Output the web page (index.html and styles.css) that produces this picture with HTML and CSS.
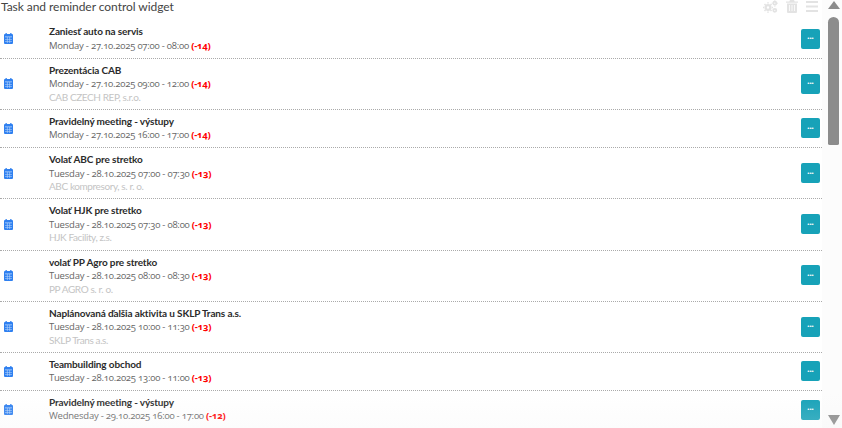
FILE: index.html
```html
<!DOCTYPE html>
<html lang="sk">
  <head>
    <meta charset="UTF-8" />
    <title>Task and reminder control widget</title>
    <link rel="stylesheet" href="styles.css">
  </head>
  <body>
    <svg class="defs" width="0" height="0">
      <symbol id="cal" viewBox="0 0 9 11">
        <path fill="#2f80f0" d="M1.500 0h1.300v1h3.400V0h1.300v1H8q1 0 1 1v8q0 1-1 1H1q-1 0-1-1V2q0-1 1-1h.5z"/>
        <path fill="#bcd8fb" d="M1 3.600h7v.7H1zM1 6h7v.6H1zM1 8.200h7v.6H1zM2.900 4.300h.6v5.700h-.6zM5.500 4.300h.6v5.700h-.6z"/>
      </symbol>
    </svg>
    <div class="widget">
      <div class="main">
        <div class="head">
          <span class="head-title">Task and reminder control widget</span>
          <div class="tools">
            <svg width="15" height="13" viewBox="0 0 15 13"><g fill="none" stroke="#e3e3e3"><circle cx="5" cy="7.500" r="2.400" stroke-width="2.400"/><circle cx="11.800" cy="3.200" r="1.500" stroke-width="1.800"/><circle cx="11.800" cy="10.300" r="1.500" stroke-width="1.800"/></g><path stroke="#e3e3e3" stroke-width="1.600" d="M5 2.300v1.200M5 11.500v1.200M0 7.500h1M9 7.500h1M1.500 4l1 1M7.500 10l1 1M8.500 4l-1 1M2.500 10l-1 1M11.800 0v.6M11.800 5.800v.6M8.800 3.200h.6M14.200 3.200h.6"/></svg>
            <svg width="12" height="13" viewBox="0 0 12 13"><path fill="#e3e3e3" d="M4 0h4l.7 1.500H12v1.200H0V1.500h3.300zM1 3.500h10V12q0 1-1 1H2q-1 0-1-1z"/><path stroke="#fff" stroke-width=".8" d="M3.500 5v6M6 5v6M8.500 5v6"/></svg>
            <svg width="12" height="11" viewBox="0 0 12 11"><path fill="#e3e3e3" d="M0 0h12v2H0zM0 4.500h12v2H0zM0 9h12v2H0z"/></svg>
          </div>
        </div>
        <div class="list">
          <div class="row">
            <svg class="cal"><use href="#cal"/></svg>
            <div class="info">
              <div class="name">Zaniesť auto na servis</div>
              <div class="when">Monday - 27.10.2025 07:00 - 08:00 <b>(-14)</b></div>
            </div>
            <button class="more">...</button>
          </div>
          <div class="row">
            <svg class="cal"><use href="#cal"/></svg>
            <div class="info">
              <div class="name">Prezentácia CAB</div>
              <div class="when">Monday - 27.10.2025 09:00 - 12:00 <b>(-14)</b></div>
              <div class="firm">CAB CZECH REP, s.r.o.</div>
            </div>
            <button class="more">...</button>
          </div>
          <div class="row">
            <svg class="cal"><use href="#cal"/></svg>
            <div class="info">
              <div class="name">Pravidelný meeting - výstupy</div>
              <div class="when">Monday - 27.10.2025 16:00 - 17:00 <b>(-14)</b></div>
            </div>
            <button class="more">...</button>
          </div>
          <div class="row">
            <svg class="cal"><use href="#cal"/></svg>
            <div class="info">
              <div class="name">Volať ABC pre stretko</div>
              <div class="when">Tuesday - 28.10.2025 07:00 - 07:30 <b>(-13)</b></div>
              <div class="firm">ABC kompresory, s. r. o.</div>
            </div>
            <button class="more">...</button>
          </div>
          <div class="row">
            <svg class="cal"><use href="#cal"/></svg>
            <div class="info">
              <div class="name">Volať HJK pre stretko</div>
              <div class="when">Tuesday - 28.10.2025 07:30 - 08:00 <b>(-13)</b></div>
              <div class="firm">HJK Facility, z.s.</div>
            </div>
            <button class="more">...</button>
          </div>
          <div class="row">
            <svg class="cal"><use href="#cal"/></svg>
            <div class="info">
              <div class="name">volať PP Agro pre stretko</div>
              <div class="when">Tuesday - 28.10.2025 08:00 - 08:30 <b>(-13)</b></div>
              <div class="firm">PP AGRO s. r. o.</div>
            </div>
            <button class="more">...</button>
          </div>
          <div class="row">
            <svg class="cal"><use href="#cal"/></svg>
            <div class="info">
              <div class="name">Naplánovaná ďalšia aktivita u SKLP Trans a.s.</div>
              <div class="when">Tuesday - 28.10.2025 10:00 - 11:30 <b>(-13)</b></div>
              <div class="firm">SKLP Trans a.s.</div>
            </div>
            <button class="more">...</button>
          </div>
          <div class="row">
            <svg class="cal"><use href="#cal"/></svg>
            <div class="info">
              <div class="name">Teambuilding obchod</div>
              <div class="when">Tuesday - 28.10.2025 13:00 - 11:00 <b>(-13)</b></div>
            </div>
            <button class="more">...</button>
          </div>
          <div class="row">
            <svg class="cal"><use href="#cal"/></svg>
            <div class="info">
              <div class="name">Pravidelný meeting - výstupy</div>
              <div class="when">Wednesday - 29.10.2025 16:00 - 17:00 <b>(-12)</b></div>
            </div>
            <button class="more">...</button>
          </div>
        </div>
      </div>
      <div class="scroll">
        <div class="arrow up"></div>
        <div class="thumb"></div>
        <div class="arrow down"></div>
      </div>
      <div class="fade"></div>
    </div>
  </body>
</html>
```

FILE: styles.css
```css
* {
  box-sizing: border-box;
  margin: 0;
  padding: 0;
}
html,
body {
  height: 100%;
  overflow: hidden;
}
body {
  font-family: Lato, "Open Sans", sans-serif;
  background: #fff;
  color: #333;
}
.defs {
  position: absolute;
}
.widget {
  position: relative;
  display: flex;
  height: 428px;
  overflow: hidden;
}
.main {
  width: 822px;
  flex: none;
}
.head {
  display: flex;
  justify-content: space-between;
  align-items: center;
  height: 13px;
}
.head-title {
  font-size: 12px;
  color: #444;
  letter-spacing: -0.050px;
  padding-left: 1px;
}
.tools {
  display: flex;
  align-items: center;
  gap: 8px;
  padding-right: 4px;
}
.list {
  padding-top: 7.400px;
}
.row {
  display: flex;
  align-items: center;
  padding: 5px 2px 5.250px 4px;
  border-bottom: 1px dotted #aaa;
}
.cal {
  width: 9px;
  height: 11px;
  flex: none;
  margin-right: 36px;
}
.info {
  flex: 1;
  font-size: 10px;
  line-height: 12.800px;
}
.name {
  font-weight: 700;
  color: #2b2b2b;
  letter-spacing: -0.130px;
  margin-bottom: 1.500px;
}
.when {
  font-family: "Open Sans", Lato, sans-serif;
  font-size: 9.500px;
  color: #666;
  letter-spacing: -0.220px;
  font-variant-numeric: oldstyle-nums;
}
.when b {
  color: #f00;
}
.firm {
  color: #c4c4c4;
  letter-spacing: -0.400px;
}
.more {
  width: 19px;
  height: 20px;
  padding-bottom: 5px;
  border: none;
  border-radius: 2px;
  background: #17a2b8;
  color: #fff;
  font-family: inherit;
  font-size: 9px;
  font-weight: 900;
  line-height: 12px;
}
.scroll {
  flex: 1;
  display: flex;
  flex-direction: column;
  align-items: center;
  background: #fcfcfc;
  padding: 1px 0 3px 3px;
}
.arrow {
  width: 0;
  height: 0;
  border-left: 6.500px solid transparent;
  border-right: 6.500px solid transparent;
}
.arrow.up {
  border-bottom: 8px solid #8c8c8c;
}
.arrow.down {
  border-top: 10px solid #8c8c8c;
  margin-top: auto;
}
.thumb {
  width: 11px;
  height: 128px;
  margin-top: 8px;
  background: #8c8c8c;
  border-radius: 6px 6px 2px 2px;
}
.fade {
  position: absolute;
  left: 0;
  right: 0;
  bottom: 0;
  height: 34px;
  pointer-events: none;
  background: linear-gradient(to bottom, rgba(240, 240, 240, 0), rgba(240, 240, 240, 0.200));
}
```
